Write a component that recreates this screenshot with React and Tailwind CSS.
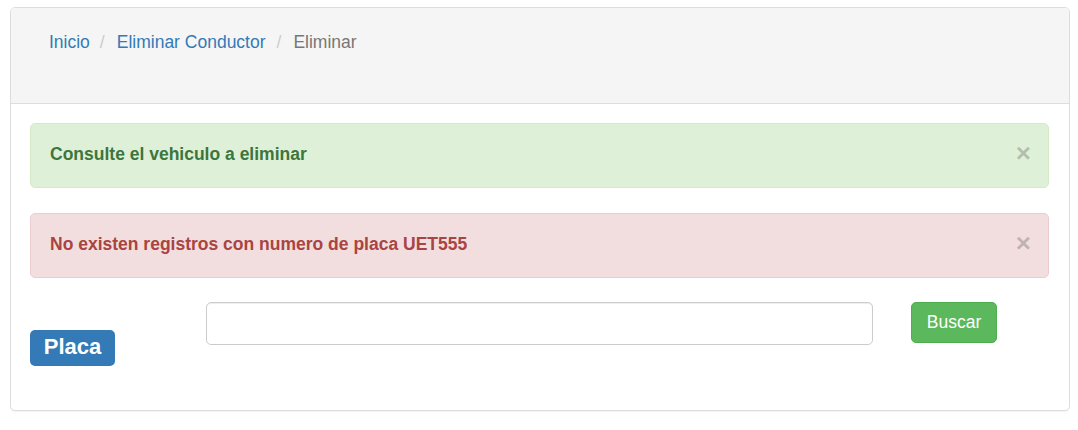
import React from "react";

function Alert({ tone, children }) {
  const styles =
    tone === "success"
      ? "bg-[#dff0d8] border-[#d6e9c6] text-[#3c763d]"
      : "bg-[#f2dede] border-[#ebccd1] text-[#a94442]";
  return (
    <div className={`relative border rounded-[5px] pl-[19px] pr-[44px] pt-[18px] pb-[20px] ${styles}`}>
      <span className="font-bold text-[17.5px] leading-[25px]">{children}</span>
      <span className="absolute right-[17px] top-[16px] text-[26px] leading-[26px] font-bold text-black opacity-20 [text-shadow:0_1px_0_#fff]">
        ×
      </span>
    </div>
  );
}

export default function App() {
  return (
    <div className="bg-white w-[1078px] h-[430px] pt-[7px] font-['Liberation_Sans',Arial,sans-serif]">
      <div className="ml-[10px] w-[1060px] border border-[#ddd] rounded-[5px] shadow-[0_1px_1px_rgba(0,0,0,0.05)] overflow-hidden">
        <div className="bg-[#f5f5f5] h-[96px] border-b border-[#ddd] pt-[22px] pl-[38px]">
          <div className="flex items-center text-[17.5px] leading-[25px]">
            <span className="text-[#337ab7]">Inicio</span>
            <span className="text-[#ccc] ml-[10px] mr-[12px]">/</span>
            <span className="text-[#337ab7]">Eliminar Conductor</span>
            <span className="text-[#ccc] ml-[11px] mr-[12px]">/</span>
            <span className="text-[#777]">Eliminar</span>
          </div>
        </div>
        <div className="pt-[19px] pl-[19px] pr-[20px] pb-[44px]">
          <Alert tone="success">Consulte el vehiculo a eliminar</Alert>
          <div className="h-[25px]" />
          <Alert tone="danger">No existen registros con numero de placa UET555</Alert>
          <div className="flex items-start mt-[24px]">
            <span className="mt-[28px] w-[85px] h-[36px] flex items-center justify-center pb-[3px] bg-[#337ab7] text-white font-bold text-[22px] leading-[24px] rounded-[5px]">
              Placa
            </span>
            <input
              type="text"
              className="ml-[91px] w-[667px] h-[43px] border border-[#ccc] rounded-[5px] px-[15px] text-[17.5px] text-[#555] shadow-[inset_0_1px_1px_rgba(0,0,0,0.075)] outline-none bg-white"
            />
            <button className="ml-[38px] w-[86px] h-[41px] flex items-center justify-center bg-[#5cb85c] border border-[#4cae4c] rounded-[5px] text-white text-[17.5px] leading-[25px]">
              Buscar
            </button>
          </div>
        </div>
      </div>
    </div>
  );
}
